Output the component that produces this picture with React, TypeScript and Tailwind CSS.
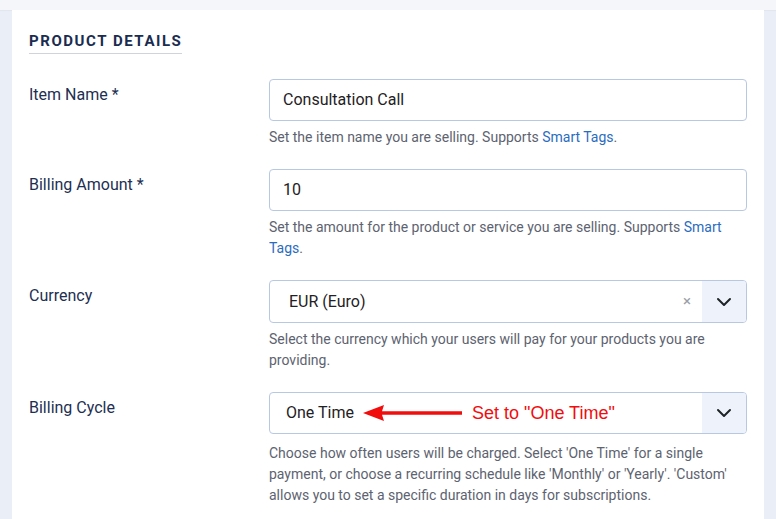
import React from "react";

const font = { fontFamily: "Roboto, 'Noto Sans', sans-serif" };

const Chevron = () => (
  <svg width="16" height="10" viewBox="0 0 16 10" fill="none">
    <path d="M2 2l6 6 6-6" stroke="#1f2328" strokeWidth="2" strokeLinecap="round" strokeLinejoin="round" />
  </svg>
);

const Help = ({ children }: { children: React.ReactNode }) => (
  <p className="mt-[6px] text-[14px] leading-[21px] text-[#5d6370]">{children}</p>
);

const Label = ({ children }: { children: React.ReactNode }) => (
  <div className="pt-[4px] text-[16px] leading-[24px] text-[#1d2f52]">{children}</div>
);

export default function App() {
  return (
    <div className="min-h-screen bg-[#e9eef7]" style={font}>
      <div className="h-[10px] bg-[#f4f6fa] shadow-[0_1px_1px_rgba(0,0,0,0.03)]" />
      <div className="px-[12px]">
        <div className="bg-white min-h-[509px] pl-[17px] pr-[17px] pt-[19px]">
          {/* Heading */}
          <div className="inline-block border-b-[1.5px] border-[#cfd3da] pb-[1px]">
            <h2 className="text-[15px] leading-[22px] font-bold tracking-[1.55px] text-[#1a2c50]">PRODUCT DETAILS</h2>
          </div>

          <div className="mt-[25px] flex flex-col gap-[21px]">
            {/* Item Name */}
            <div className="grid grid-cols-[240px_478px]">
              <Label>Item Name *</Label>
              <div>
                <div className="h-[42px] rounded-[4px] border border-[#b9c8e2] flex items-center px-[13px] text-[16px] text-[#1f2124]">
                  Consultation Call
                </div>
                <Help>
                  Set the item name you are selling. Supports <span className="text-[#2b6cc0]">Smart Tags</span>.
                </Help>
              </div>
            </div>

            {/* Billing Amount */}
            <div className="grid grid-cols-[240px_478px]">
              <Label>Billing Amount *</Label>
              <div>
                <div className="h-[42px] rounded-[4px] border border-[#b9c8e2] flex items-center px-[13px] text-[16px] text-[#1f2124]">
                  10
                </div>
                <Help>
                  Set the amount for the product or service you are selling. Supports{" "}
                  <span className="text-[#2b6cc0]">Smart Tags</span>.
                </Help>
              </div>
            </div>

            {/* Currency */}
            <div className="grid grid-cols-[240px_478px]">
              <Label>Currency</Label>
              <div>
                <div className="h-[43px] rounded-[4px] border border-[#b9c8e2] flex items-stretch overflow-hidden">
                  <div className="flex-1 flex items-center pl-[19px] text-[16px] text-[#1f2124]">EUR (Euro)</div>
                  <div className="w-[30px] flex items-center justify-center text-[15px] text-[#9a9ea6]">×</div>
                  <div className="w-[44px] bg-[#eef2fa] flex items-center justify-center">
                    <Chevron />
                  </div>
                </div>
                <Help>Select the currency which your users will pay for your products you are providing.</Help>
              </div>
            </div>

            {/* Billing Cycle */}
            <div className="grid grid-cols-[240px_478px]">
              <Label>Billing Cycle</Label>
              <div>
                <div className="relative h-[42px] rounded-[4px] border border-[#b9c8e2] flex items-stretch overflow-hidden">
                  <div className="flex-1 flex items-center pl-[16px] text-[16px] text-[#1f2124]">One Time</div>
                  <div className="w-[44px] bg-[#eef2fa] flex items-center justify-center">
                    <Chevron />
                  </div>
                  {/* annotation */}
                  <div className="absolute left-[93px] top-[10px] flex items-center gap-[9px]">
                    <svg width="100" height="18" viewBox="0 0 100 18">
                      <path d="M0 9L21 1L19 7.3H99V10.7H19L21 17Z" fill="#f20d0d" />
                    </svg>
                    <span
                      className="text-[18px] leading-[20px] text-[#f20d0d]"
                      style={{ fontFamily: "'Liberation Sans', Arial, sans-serif" }}
                    >
                      Set to "One Time"
                    </span>
                  </div>
                </div>
                <div className="pt-[3px]">
                  <Help>
                    Choose how often users will be charged. Select 'One Time' for a single payment, or choose a
                    recurring schedule like 'Monthly' or 'Yearly'. 'Custom' allows you to set a specific duration in
                    days for subscriptions.
                  </Help>
                </div>
              </div>
            </div>
          </div>
        </div>
      </div>
    </div>
  );
}
